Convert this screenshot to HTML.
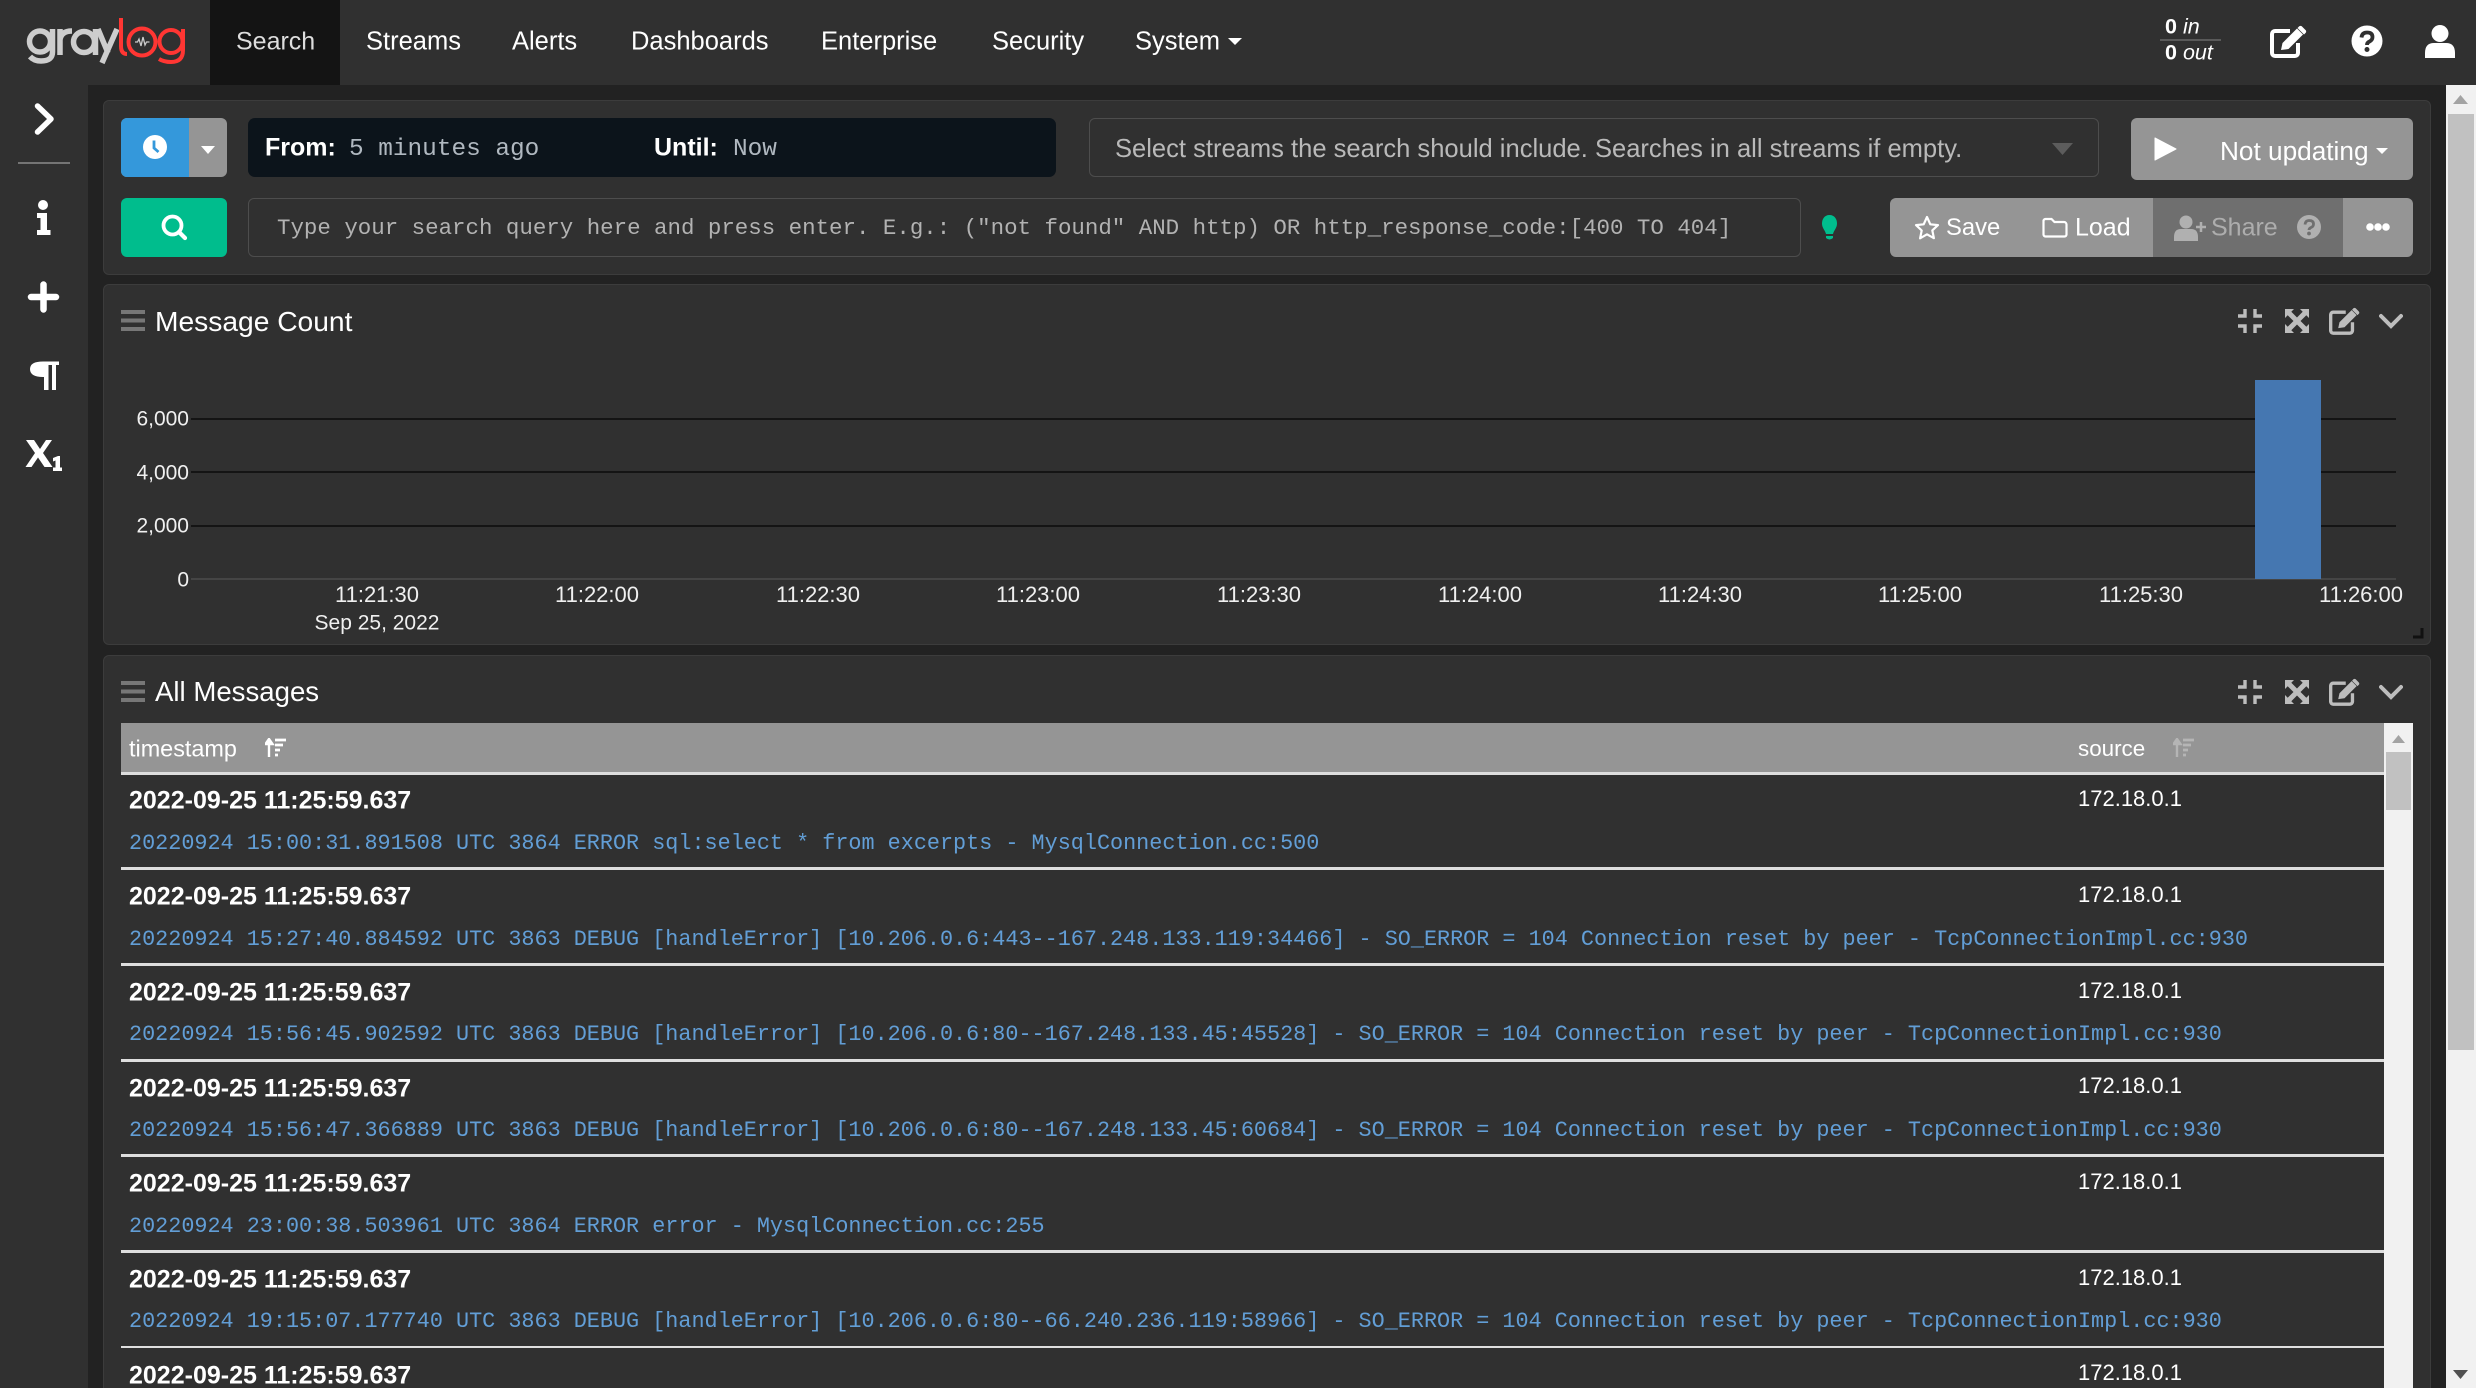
<!DOCTYPE html>
<html><head><meta charset="utf-8"><title>Graylog</title>
<style>
html,body{margin:0;padding:0;width:2476px;height:1388px;overflow:hidden;background:#222}
body{position:relative;font-family:"Liberation Sans",sans-serif;color:#fff}
.a{position:absolute}
.t{position:absolute;white-space:pre;line-height:1;transform:translateY(-50%)}
.m{font-family:"Liberation Mono",monospace}
.n{font-size:25.500px;top:41.500px;color:#fff}
svg{position:absolute;overflow:visible}
.panel{position:absolute;left:103px;width:2326px;background:#303030;border:1px solid #3c3c3c;border-radius:6px;box-sizing:content-box}
.ts{font-weight:bold;font-size:25px;left:129px}
.msg{font-family:"Liberation Mono",monospace;font-size:21.800px;left:129px;color:#629ed6}
.src{font-size:22px;left:2078px;color:#fff}
.line{position:absolute;left:121px;width:2263px;height:3px;background:#dedede}
.yl{font-size:21px;color:#f0f0f0;transform:translate(-100%,-50%)}
.xl{font-size:22px;color:#f0f0f0;transform:translate(-50%,-50%)}
.gl{position:absolute;left:191px;width:2205px;height:2px;background:#141414}
</style></head><body>
<svg width="0" height="0" style="position:absolute"><defs>
<symbol id="edit" viewBox="0 0 37 33"><path d="M20 6H5a3 3 0 0 0-3 3V28a3 3 0 0 0 3 3H25a3 3 0 0 0 3-3V18" fill="none" stroke="currentColor" stroke-width="4"/><path d="M11 25l1.500-7L27 3.500l6 6L18.500 24zM29 1.500a2 2 0 0 1 3 0l3.500 3.500a2 2 0 0 1 0 3L34 9.500l-6.500-6.500z" fill="currentColor"/></symbol>
<symbol id="compress" viewBox="0 0 24 24"><path d="M7 0v7H0M17 0v7h7M7 24v-7H0M17 24v-7h7" fill="none" stroke="currentColor" stroke-width="3.400"/></symbol>
<symbol id="expand" viewBox="0 0 24 24"><path d="M0 0h9L6.300 2.700 12 8.500 17.700 2.700 15 0h9v9l-2.700-2.700L15.500 12l5.800 5.700L24 15v9h-9l2.700-2.700L12 15.500l-5.700 5.800L9 24H0v-9l2.700 2.700L8.500 12 2.700 6.300 0 9z" fill="currentColor"/></symbol>
<symbol id="chev" viewBox="0 0 24 16"><path d="M2 3l10 10L22 3" fill="none" stroke="currentColor" stroke-width="4" stroke-linecap="round"/></symbol>
<symbol id="sort" viewBox="0 0 22 20"><path d="M4 19V3M0.500 6L4 1l3.500 5z" stroke="currentColor" stroke-width="2.400" fill="currentColor"/><path d="M10 2h11M10 7h8M10 12h5M10 17h3" stroke="currentColor" stroke-width="2.800"/></symbol>
<symbol id="burger" viewBox="0 0 24 21"><path d="M0 0h24v4H0zM0 8.500h24v4H0zM0 17h24v4H0z" fill="currentColor"/></symbol>
</defs></svg>

<!-- navbar -->
<div class="a" style="left:0;top:0;width:2476px;height:85px;background:#303030"></div>
<svg style="left:0;top:0" width="210" height="85" fill="none" stroke-width="5.500">
<g stroke="#cdcdcd"><circle cx="40" cy="41.500" r="10.500"/><path d="M52.500 29V52Q52.500 61 41 61Q34 61 30 56.500"/><path d="M60 29V55M60 40Q61 31 72 31" stroke-width="5.500"/><circle cx="84" cy="42" r="10.500"/><path d="M95.500 29V55"/><path d="M98 29L108 53M117 29L102 63" stroke-width="5.500"/></g>
<g stroke="#ff3633" stroke-width="4"><path d="M121 18V46Q121 54 127 54"/><circle cx="142" cy="42" r="13.500" stroke-width="4"/><circle cx="171" cy="41.500" r="11.500"/><path d="M183 29V50Q183 62 171 62Q164 62 159 59"/></g>
<path d="M135 42h2.500l1.500-3 2 7 2-9 2 8 1.500-3h3" stroke="#ccc" stroke-width="1.300"/>
</svg>
<div class="a" style="left:210px;top:0;width:130px;height:85px;background:#141414"></div>
<div class="t n" style="left:236px;color:#ddd;font-size:25px">Search</div>
<div class="t n" style="left:366px">Streams</div>
<div class="t n" style="left:512px">Alerts</div>
<div class="t n" style="left:631px">Dashboards</div>
<div class="t n" style="left:821px">Enterprise</div>
<div class="t n" style="left:992px">Security</div>
<div class="t n" style="left:1135px">System</div>
<svg style="left:1228px;top:38px" width="14" height="7"><path d="M0 0h14L7 7z" fill="#fff"/></svg>

<div class="t" style="left:2165px;top:27px;font-size:21.500px"><b>0</b> <i>in</i></div>
<div class="a" style="left:2160px;top:39px;width:61px;height:2px;background:#5a5a5a"></div>
<div class="t" style="left:2165px;top:53px;font-size:21.500px"><b>0</b> <i>out</i></div>
<svg style="left:2270px;top:25px;color:#fff" width="37" height="33"><use href="#edit"/></svg>
<svg style="left:2351px;top:25px" width="32" height="32"><circle cx="16" cy="16" r="15.500" fill="#fff"/><path d="M10.500 12.500Q11 7.500 16 7.500Q21.500 7.500 21.500 12Q21.500 15 18.500 16.500Q16 17.500 16 20" fill="none" stroke="#303030" stroke-width="3.800"/><circle cx="16" cy="24.500" r="2.500" fill="#303030"/></svg>
<svg style="left:2425px;top:25px" width="30" height="33"><circle cx="15" cy="8.500" r="8.500" fill="#fff"/><path d="M0 33V28Q0 18 9 18H21Q30 18 30 28V33z" fill="#fff"/></svg>

<!-- sidebar -->
<div class="a" style="left:0;top:85px;width:88px;height:1303px;background:#303030"></div>
<svg style="left:0;top:85px" width="88" height="400">
<path d="M37.500 21L51 34 37.500 47" fill="none" stroke="#fff" stroke-width="5.500" stroke-linecap="round" stroke-linejoin="round"/>
<path d="M18 78h52" stroke="#8a8a8a" stroke-width="1.500"/>
<circle cx="43" cy="120" r="5" fill="#fff"/>
<path d="M37 128h10v17h3.500v5h-13.500v-5h3.500v-12h-3.500z" fill="#fff"/>
<path d="M31 212h25M43.500 199.500v25" stroke="#fff" stroke-width="6.500" stroke-linecap="round"/>
<path d="M59 276.500v3.500h-3v25h-4v-25h-3.500v25h-4.500v-13H43Q30 292 30 284Q30 276.500 43 276.500z" fill="#fff"/>
<path d="M26 355h8l6 9 6-9h6l-9 13 9.500 14h-8l-6.500-9.500-6.500 9.500h-6l9.500-14z" fill="#fff"/>
<path d="M53 373l5-2h2v11.500h2v3.500H53v-3.500h2.500v-7l-2.500 1z" fill="#fff"/>
</svg>

<!-- search panel -->
<div class="panel" style="top:100px;height:173px"></div>
<div class="a" style="left:121px;top:118px;width:106px;height:59px;border-radius:6px;overflow:hidden;background:#959595"><div style="width:68px;height:59px;background:#3498db"></div></div>
<svg style="left:143px;top:135px" width="24" height="24"><circle cx="12" cy="12" r="12" fill="#fff"/><path d="M11 5.500V13l4.500 4" fill="none" stroke="#3498db" stroke-width="2.800"/></svg>
<svg style="left:201px;top:146px" width="14" height="8"><path d="M0 0h14L7 8z" fill="#fff"/></svg>
<div class="a" style="left:248px;top:118px;width:808px;height:59px;border-radius:7px;background:#0c141b"></div>
<div class="t" style="left:265px;top:148px;font-size:25px;font-weight:bold">From:</div>
<div class="t m" style="left:349px;top:149.500px;font-size:24.400px;color:#b0b8c0">5 minutes ago</div>
<div class="t" style="left:654px;top:148px;font-size:25px;font-weight:bold">Until:</div>
<div class="t m" style="left:733px;top:149.500px;font-size:24.400px;color:#b0b8c0">Now</div>
<div class="a" style="left:1089px;top:118px;width:1010px;height:59px;box-sizing:border-box;border:1px solid #4d4d4d;border-radius:6px"></div>
<div class="t" style="left:1115px;top:149.500px;font-size:25.550px;color:#b9b9b9" id="sel">Select streams the search should include. Searches in all streams if empty.</div>
<svg style="left:2052px;top:143px" width="21" height="12"><path d="M0 0h21L10.500 12z" fill="#5c5c5c"/></svg>
<div class="a" style="left:2131px;top:118px;width:282px;height:62px;border-radius:6px;background:#959595"></div>
<svg style="left:2154px;top:137px" width="22" height="24"><path d="M1 1L22 12 1 23z" fill="#fff" stroke="#fff" stroke-width="1" stroke-linejoin="round"/></svg>
<div class="t" style="left:2220px;top:151px;font-size:26.200px">Not updating</div>
<svg style="left:2376px;top:148px" width="12" height="6"><path d="M0 0h12L6 6z" fill="#fff"/></svg>

<div class="a" style="left:121px;top:198px;width:106px;height:59px;border-radius:6px;background:#00bd8d"></div>
<svg style="left:162px;top:215px" width="24" height="24"><circle cx="10.500" cy="10.500" r="9" fill="none" stroke="#fff" stroke-width="3.800"/><path d="M17 17l6 6" stroke="#fff" stroke-width="4.200" stroke-linecap="round"/></svg>
<div class="a" style="left:248px;top:198px;width:1553px;height:59px;box-sizing:border-box;border:1px solid #4d4d4d;border-radius:6px"></div>
<div class="t m" style="left:277px;top:227.500px;font-size:22.450px;color:#b2b2b2">Type your search query here and press enter. E.g.: ("not found" AND http) OR http_response_code:[400 TO 404]</div>
<svg style="left:1822px;top:215px" width="15" height="25"><path d="M7.500 0C2.500 0 0 4 0 8.500 0 13 3 15 4 19h7C12 15 15 13 15 8.500 15 4 12.500 0 7.500 0z" fill="#00bd8d"/><path d="M4 21h7v2q-3.500 3-7 0z" fill="#00bd8d"/></svg>

<div class="a" style="left:1890px;top:198px;width:523px;height:59px;border-radius:6px;overflow:hidden;background:#959595"><div class="a" style="left:263px;top:0;width:190px;height:59px;background:#6f6f6f"></div></div>
<svg style="left:1914px;top:215px" width="26" height="25"><path d="M13 2l3.300 7.300 7.700.8-5.700 5.300 1.600 7.800L13 19.300 6.100 23.300l1.600-7.800L2 10.100l7.700-.8z" fill="none" stroke="#fff" stroke-width="2.200" stroke-linejoin="round"/></svg>
<div class="t" style="left:1946px;top:228px;font-size:23.800px">Save</div>
<svg style="left:2042px;top:218px" width="26" height="20"><path d="M1.500 3a2 2 0 0 1 2-2h6l3 3h9.500a2.500 2.500 0 0 1 2.500 2.500V16.500a2 2 0 0 1-2 2H3.500a2 2 0 0 1-2-2z" fill="none" stroke="#fff" stroke-width="2.200"/></svg>
<div class="t" style="left:2075px;top:228px;font-size:25px">Load</div>
<svg style="left:2174px;top:215px" width="32" height="26"><circle cx="12" cy="7" r="6.500" fill="#b0b0b0"/><path d="M0 26v-4q0-8 7-8h10q7 0 7 8v4z" fill="#b0b0b0"/><path d="M22 12h10M27 7v10" stroke="#b0b0b0" stroke-width="2.500"/></svg>
<div class="t" style="left:2211px;top:228px;font-size:25px;color:#adadad">Share</div>
<svg style="left:2297px;top:215px" width="24" height="24"><circle cx="12" cy="12" r="12" fill="#b0b0b0"/><path d="M8 9.500Q8.500 5.500 12 5.500Q16.500 5.500 16.500 9Q16.500 11.500 14 12.500Q12 13.500 12 15" fill="none" stroke="#6f6f6f" stroke-width="2.800"/><circle cx="12" cy="18.500" r="1.900" fill="#6f6f6f"/></svg>
<svg style="left:2366px;top:223px" width="24" height="8"><circle cx="4" cy="4" r="3.800" fill="#fff"/><circle cx="12" cy="4" r="3.800" fill="#fff"/><circle cx="20" cy="4" r="3.800" fill="#fff"/></svg>

<!-- message count panel -->
<div class="panel" style="top:284px;height:359px"></div>
<svg style="left:121px;top:310px;color:#777" width="24" height="21"><use href="#burger"/></svg>
<div class="t" style="left:155px;top:321px;font-size:28.200px">Message Count</div>
<svg style="left:2238px;top:309px;color:#bdbdbd" width="24" height="24"><use href="#compress"/></svg>
<svg style="left:2285px;top:309px;color:#bdbdbd" width="24" height="24"><use href="#expand"/></svg>
<svg style="left:2329px;top:307px;color:#bdbdbd" width="31" height="28"><use href="#edit"/></svg>
<svg style="left:2379px;top:313px;color:#bdbdbd" width="24" height="16"><use href="#chev"/></svg>

<div class="gl" style="top:418px"></div>
<div class="gl" style="top:471px"></div>
<div class="gl" style="top:525px"></div>
<div class="gl" style="top:578px;background:#454545"></div>
<div class="a" style="left:2255px;top:380px;width:66px;height:199px;background:#4577b1"></div>
<div class="t yl" style="left:189px;top:419px">6,000</div>
<div class="t yl" style="left:189px;top:472.500px">4,000</div>
<div class="t yl" style="left:189px;top:526px">2,000</div>
<div class="t yl" style="left:189px;top:580px">0</div>
<div class="t xl" style="left:377px;top:595px">11:21:30</div>
<div class="t xl" style="left:597px;top:595px">11:22:00</div>
<div class="t xl" style="left:818px;top:595px">11:22:30</div>
<div class="t xl" style="left:1038px;top:595px">11:23:00</div>
<div class="t xl" style="left:1259px;top:595px">11:23:30</div>
<div class="t xl" style="left:1480px;top:595px">11:24:00</div>
<div class="t xl" style="left:1700px;top:595px">11:24:30</div>
<div class="t xl" style="left:1920px;top:595px">11:25:00</div>
<div class="t xl" style="left:2141px;top:595px">11:25:30</div>
<div class="t xl" style="left:2361px;top:595px">11:26:00</div>
<div class="t xl" style="left:377px;top:623px;font-size:21px">Sep 25, 2022</div>
<svg style="left:2413px;top:628px" width="11" height="11"><path d="M9 0v9H0" fill="none" stroke="#111" stroke-width="3"/></svg>

<!-- messages panel -->
<div class="panel" style="top:655px;height:800px"></div>
<svg style="left:121px;top:681px;color:#777" width="24" height="21"><use href="#burger"/></svg>
<div class="t" style="left:155px;top:692px;font-size:27.600px">All Messages</div>
<svg style="left:2238px;top:680px;color:#bdbdbd" width="24" height="24"><use href="#compress"/></svg>
<svg style="left:2285px;top:680px;color:#bdbdbd" width="24" height="24"><use href="#expand"/></svg>
<svg style="left:2329px;top:678px;color:#bdbdbd" width="31" height="28"><use href="#edit"/></svg>
<svg style="left:2379px;top:684px;color:#bdbdbd" width="24" height="16"><use href="#chev"/></svg>

<div class="a" style="left:121px;top:723px;width:2263px;height:49px;background:#959595"></div>
<div class="line" style="top:772px"></div>
<div class="t" style="left:129px;top:749px;font-size:23.400px">timestamp</div>
<svg style="left:265px;top:738px;color:#fff" width="22" height="20"><use href="#sort"/></svg>
<div class="t" style="left:2078px;top:749px;font-size:22.400px">source</div>
<svg style="left:2173px;top:738px;color:#b5b5b5" width="22" height="20"><use href="#sort"/></svg>

<div class="a" style="left:2384px;top:723px;width:29px;height:665px;background:#f1f1f1"></div>
<svg style="left:2392px;top:735px" width="14" height="8"><path d="M0 8h13L6.500 0z" fill="#a3a3a3"/></svg>
<div class="a" style="left:2386px;top:752px;width:25px;height:58px;background:#c1c1c1"></div>

<div class="t ts" style="top:801px">2022-09-25 11:25:59.637</div>
<div class="t src" style="top:798.500px">172.18.0.1</div>
<div class="t msg" style="top:843.500px">20220924 15:00:31.891508 UTC 3864 ERROR sql:select * from excerpts - MysqlConnection.cc:500</div>
<div class="line" style="top:867px"></div>

<div class="t ts" style="top:897px">2022-09-25 11:25:59.637</div>
<div class="t src" style="top:894.500px">172.18.0.1</div>
<div class="t msg" style="top:939.500px">20220924 15:27:40.884592 UTC 3863 DEBUG [handleError] [10.206.0.6:443--167.248.133.119:34466] - SO_ERROR = 104 Connection reset by peer - TcpConnectionImpl.cc:930</div>
<div class="line" style="top:963px"></div>

<div class="t ts" style="top:993px">2022-09-25 11:25:59.637</div>
<div class="t src" style="top:990.500px">172.18.0.1</div>
<div class="t msg" style="top:1034.500px">20220924 15:56:45.902592 UTC 3863 DEBUG [handleError] [10.206.0.6:80--167.248.133.45:45528] - SO_ERROR = 104 Connection reset by peer - TcpConnectionImpl.cc:930</div>
<div class="line" style="top:1059px"></div>

<div class="t ts" style="top:1088.500px">2022-09-25 11:25:59.637</div>
<div class="t src" style="top:1085.500px">172.18.0.1</div>
<div class="t msg" style="top:1130.500px">20220924 15:56:47.366889 UTC 3863 DEBUG [handleError] [10.206.0.6:80--167.248.133.45:60684] - SO_ERROR = 104 Connection reset by peer - TcpConnectionImpl.cc:930</div>
<div class="line" style="top:1154px"></div>

<div class="t ts" style="top:1184px">2022-09-25 11:25:59.637</div>
<div class="t src" style="top:1181.500px">172.18.0.1</div>
<div class="t msg" style="top:1226.500px">20220924 23:00:38.503961 UTC 3864 ERROR error - MysqlConnection.cc:255</div>
<div class="line" style="top:1250px"></div>

<div class="t ts" style="top:1280px">2022-09-25 11:25:59.637</div>
<div class="t src" style="top:1277.500px">172.18.0.1</div>
<div class="t msg" style="top:1322px">20220924 19:15:07.177740 UTC 3863 DEBUG [handleError] [10.206.0.6:80--66.240.236.119:58966] - SO_ERROR = 104 Connection reset by peer - TcpConnectionImpl.cc:930</div>
<div class="line" style="top:1346px;height:2px"></div>

<div class="t ts" style="top:1375.500px">2022-09-25 11:25:59.637</div>
<div class="t src" style="top:1373px">172.18.0.1</div>

<!-- page scrollbar -->
<div class="a" style="left:2446px;top:85px;width:30px;height:1303px;background:#f1f1f1"></div>
<svg style="left:2453px;top:95px" width="15" height="9"><path d="M0 9h15L7.500 0z" fill="#a3a3a3"/></svg>
<div class="a" style="left:2448px;top:114px;width:26px;height:936px;background:#c1c1c1"></div>
<svg style="left:2453px;top:1370px" width="15" height="9"><path d="M0 0h15L7.500 9z" fill="#505050"/></svg>
</body></html>
